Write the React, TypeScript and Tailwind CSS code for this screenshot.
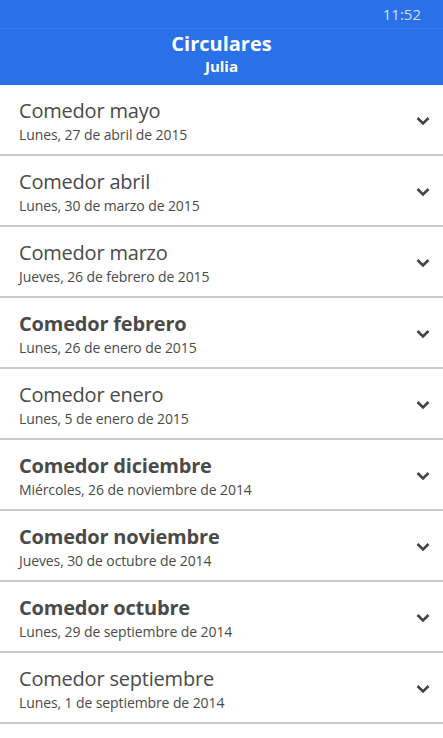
import React from 'react';

const items = [
  { title: 'Comedor mayo', date: 'Lunes, 27 de abril de 2015', unread: false },
  { title: 'Comedor abril', date: 'Lunes, 30 de marzo de 2015', unread: false },
  { title: 'Comedor marzo', date: 'Jueves, 26 de febrero de 2015', unread: false },
  { title: 'Comedor febrero', date: 'Lunes, 26 de enero de 2015', unread: true },
  { title: 'Comedor enero', date: 'Lunes, 5 de enero de 2015', unread: false },
  { title: 'Comedor diciembre', date: 'Miércoles, 26 de noviembre de 2014', unread: true },
  { title: 'Comedor noviembre', date: 'Jueves, 30 de octubre de 2014', unread: true },
  { title: 'Comedor octubre', date: 'Lunes, 29 de septiembre de 2014', unread: true },
  { title: 'Comedor septiembre', date: 'Lunes, 1 de septiembre de 2014', unread: false },
];

const Chevron = () => (
  <svg width="14" height="10" viewBox="0 0 14 10" className="mt-[3px] text-[#444]">
    <path d="M1.5 2 L7 7.5 L12.5 2" fill="none" stroke="currentColor" strokeWidth="2.6" />
  </svg>
);

const App = () => {
  return (
    <div className="h-[738px] w-[443px] overflow-hidden bg-white font-['Open_Sans',sans-serif]">
      {/* status bar */}
      <div className="flex h-[29px] items-center justify-end border-b border-[#3a7cec] bg-[#2a70e8] pr-[22px]">
        <span className="text-[15px] text-[#cfe0ff]">11:52</span>
      </div>

      {/* header */}
      <div className="flex h-[56px] flex-col items-center justify-center bg-[#2a70e8] pb-[6px] text-white">
        <div className="text-[20px] font-bold leading-[24px]">Circulares</div>
        <div className="text-[15px] font-bold leading-[20px]">Julia</div>
      </div>

      {/* list */}
      <div>
        {items.map((item) => (
          <div
            key={item.title}
            className="flex h-[71px] items-center justify-between border-b-2 border-[#c9c9c9] pl-[19px] pr-[13px]"
          >
            <div className="flex flex-col pt-[2px] text-[#4a4a4a]">
              <span
                className={`text-[20px] leading-[28px] tracking-[-0.2px] ${item.unread ? 'font-bold' : 'font-normal'}`}
              >
                {item.title}
              </span>
              <span className="text-[14px] leading-[20px] tracking-[-0.1px]">{item.date}</span>
            </div>
            <Chevron />
          </div>
        ))}
      </div>
    </div>
  );
};

export default App;
